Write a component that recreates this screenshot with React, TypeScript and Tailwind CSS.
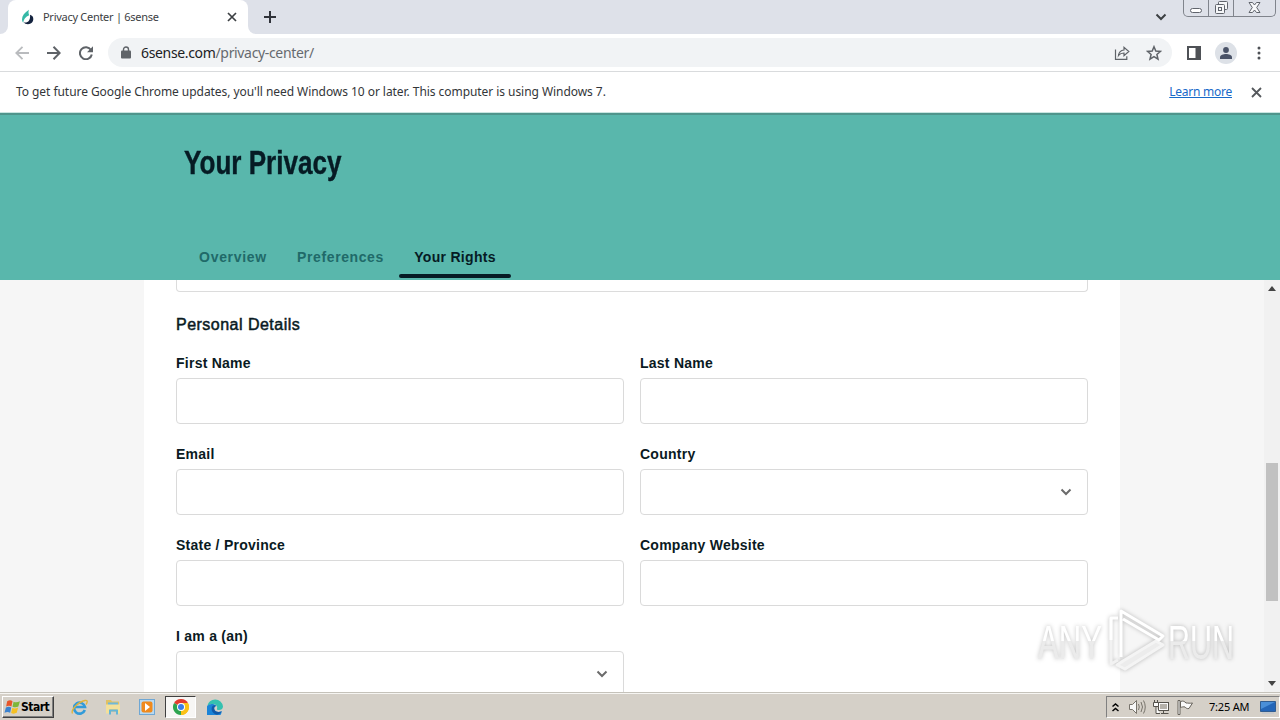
import React from "react";

interface Field {
  label: string;
  select?: boolean;
}

const FIELDS: Field[] = [
  { label: "First Name" },
  { label: "Last Name" },
  { label: "Email" },
  { label: "Country", select: true },
  { label: "State / Province" },
  { label: "Company Website" },
  { label: "I am a (an)", select: true },
];

const TABS = [
  { label: "Overview", className: "w-[98px] tracking-[0.7px]" },
  { label: "Preferences", className: "w-[117px] tracking-[0.6px]" },
  { label: "Your Rights", className: "w-[112px] tracking-[0.3px]" },
];

const ChevronDown = ({ className }: { className?: string }) => (
  <svg
    className={className}
    width="12"
    height="8"
    viewBox="0 0 12 8"
    fill="none"
    stroke="currentColor"
    strokeWidth="2"
  >
    <path d="M1.5 1.5 6 6l4.5-4.5" />
  </svg>
);

const TabStrip = () => (
  <div className="flex h-[34px] shrink-0 bg-[#dee1e9]">
    <div className="w-2 bg-white">
      <div className="h-full rounded-br-lg bg-[#dee1e9]" />
    </div>
    <div className="flex w-60 items-center rounded-t-lg bg-white pl-3 pr-[11px]">
      <svg width="15" height="16" viewBox="0 0 15 16">
        <path d="M9 .8C4.500 3.500 2 7 2 10.500c0 1.300.4 2.400 1.200 3.200C3.700 10.300 5.500 7.800 9.200 6.200 8.300 4.200 8.300 2.500 9 .800Z" fill="#35b8a6" />
        <path
          d="M10 5.800c2.300.6 3.300 2.200 3.300 4.300 0 3-2.200 5.200-5.300 5.200-2 0-3.500-.7-4.300-2 2 .6 3.700.2 5-1.200 1-1.200 1.700-3.500 1.300-6.300Z"
          fill="#14233f"
        />
        <path d="M5.300 11.500c.3-1.800 1.500-3 3.200-3.300.3 1.700-.8 3.300-3.200 3.300Z" fill="#fff" />
      </svg>
      <span className="ml-2 flex-1 whitespace-nowrap text-[11px] tracking-[-0.28px] text-[#3c4043]">
        Privacy Center | 6sense
      </span>
      <svg width="10" height="10" viewBox="0 0 10 10" stroke="#3c4043" strokeWidth="1.700">
        <path d="m1 1 8 8M9 1 1 9" />
      </svg>
    </div>
    <div className="w-2 bg-white">
      <div className="h-full rounded-bl-lg bg-[#dee1e9]" />
    </div>
    <div className="flex flex-1 items-center pl-2">
      <svg width="12" height="12" viewBox="0 0 12 12" stroke="#30333a" strokeWidth="2">
        <path d="M6 0v12M0 6h12" />
      </svg>
    </div>
    <ChevronDown className="mr-4 mt-[13px] text-[#3c4043]" />
    {/* Window caption buttons */}
    <div className="mr-1 flex h-[17px] w-[93px] rounded-b-[5px] border border-t-0 border-[#80848c] text-[#60646c]">
      <div className="flex w-[25px] items-end justify-center border-r border-[#80848c] pb-[3px]">
        <div className="h-[5px] w-3 rounded-sm border border-[#60646c] bg-white" />
      </div>
      <div className="flex w-[25px] items-end justify-center border-r border-[#80848c] pb-0.5">
        <svg width="13" height="13" viewBox="0 0 13 13" fill="#f5f6f8" stroke="currentColor">
          <rect x="3.500" y=".5" width="9" height="8" rx="1" />
          <rect x=".5" y="3.500" width="9" height="9" rx="1" />
          <rect x="3.500" y="6.500" width="3" height="3" />
        </svg>
      </div>
      <div className="flex flex-1 items-end justify-center pb-[3px]">
        <svg width="13" height="11" viewBox="0 0 13 11" fill="#f8f9fb" stroke="currentColor">
          <path d="M1 .5h3.500l2 2.500 2-2.500H12L8.700 5.500l3.300 5H8.500l-2-2.500-2 2.500H1l3.300-5Z" />
        </svg>
      </div>
    </div>
  </div>
);

const Toolbar = () => (
  <div className="flex h-[38px] shrink-0 items-center border-b border-[#d9dbdd] bg-white text-[#5f6368]">
    <svg className="ml-[15px] text-[#b9bbbe]" width="14" height="14" viewBox="0 0 14 14" fill="none" stroke="currentColor" strokeWidth="1.800">
      <path d="M14 7H1.500M7.500.8 1.300 7l6.200 6.200" />
    </svg>
    <svg className="ml-[18px]" width="14" height="14" viewBox="0 0 14 14" fill="none" stroke="currentColor" strokeWidth="2">
      <path d="M0 7h12.500M6.500.8 12.700 7l-6.200 6.200" />
    </svg>
    <svg className="ml-[18px]" width="14" height="14" viewBox="0 0 14 14">
      <path d="M12 4a6 6 0 1 0 .8 4.500" fill="none" stroke="currentColor" strokeWidth="2" />
      <path d="M14 .300v6H8Z" fill="currentColor" />
    </svg>
    <div className="ml-[15px] flex h-[29px] w-[1064px] items-center rounded-full bg-[#f1f3f5] pl-[13px] pr-[10px]">
      <svg width="10" height="13" viewBox="0 0 10 13">
        <rect y="4.500" width="10" height="8" rx="1" fill="#5f6368" />
        <path d="M2.500 5V3.500a2.500 2.500 0 0 1 5 0V5" fill="none" stroke="#5f6368" strokeWidth="1.400" />
      </svg>
      <span className="ml-[10px] flex-1 text-[14px] tracking-[-0.34px] text-[#666a6f]">
        <span className="text-[#202124]">6sense.com</span>/privacy-center/
      </span>
      <svg width="16" height="16" viewBox="0 0 16 16" fill="none" stroke="currentColor" strokeWidth="1.200">
        <path d="M1.500 4.500v9.800h11.300v-3M4.500 10.500c.5-3.600 2.500-5.200 5.500-5.500V2.300L14.800 6.500 10 10.700V8c-2.500 0-4.200.8-5.500 2.500Z" />
      </svg>
      <svg className="ml-4" width="16" height="16" viewBox="0 0 16 16" fill="none" stroke="currentColor" strokeWidth="1.500">
        <path d="m8 1.700 1.800 4.300 4.700.4-3.600 3.100 1.100 4.600L8 11.600l-4 2.500 1.100-4.600L1.500 6.400 6.200 6Z" />
      </svg>
    </div>
    <svg className="ml-[15px]" width="14" height="14" viewBox="0 0 14 14">
      <path d="M0 0h14v14H0Zm2 2v10h6.500V2Z" fill="#4e5156" fillRule="evenodd" />
    </svg>
    <div className="ml-[14px] flex size-[22px] items-center justify-center rounded-full bg-[#dde1e7]">
      <svg width="12" height="12" viewBox="0 0 12 12" fill="#4a5368">
        <circle cx="6" cy="3" r="2.900" />
        <path d="M0 12v-1.800C0 8.200 3.500 7 6 7s6 1.200 6 3.200V12Z" />
      </svg>
    </div>
    <svg className="ml-[20px]" width="4" height="14" viewBox="0 0 4 14" fill="#4e5156">
      <circle cx="2" cy="2" r="1.500" />
      <circle cx="2" cy="7" r="1.500" />
      <circle cx="2" cy="12" r="1.500" />
    </svg>
  </div>
);

const InfoBar = () => (
  <div className="flex h-[41px] shrink-0 items-center border-b border-[#c9e5e1] bg-white pl-4 pr-[18px] text-[12px] text-[#333639]">
    <span className="flex-1 whitespace-nowrap tracking-[-0.055px]">
      To get future Google Chrome updates, you'll need Windows 10 or later. This computer is using Windows 7.
    </span>
    <a className="tracking-[-0.25px] text-[#1769c9] underline">Learn more</a>
    <svg className="ml-[19px]" width="11" height="11" viewBox="0 0 11 11" stroke="#55585c" strokeWidth="1.800">
      <path d="m1 1 9 9M10 1l-9 9" />
    </svg>
  </div>
);

const PrivacyHeader = () => (
  <div className="flex h-[167px] shrink-0 flex-col justify-between border-t-2 border-[#4f958c] bg-[#59b7ac] pl-[184px] text-[#061b24]">
    <h1 className="mt-[27px] origin-left scale-x-[0.79] font-['Liberation_Sans',Arial,sans-serif] text-[33px] font-bold leading-[42px] [-webkit-text-stroke:0.4px]">
      Your Privacy
    </h1>
    <div className="mb-0.5 flex text-center font-['Liberation_Sans',Arial,sans-serif] text-[14px] font-bold">
      {TABS.map((tab) => (
        <div
          key={tab.label}
          className={`${tab.className} relative h-[37px] leading-[33px] ${
            tab.label === "Your Rights" ? "" : "text-[#206a69]"
          }`}
        >
          {tab.label}
          {tab.label === "Your Rights" && (
            <div className="absolute inset-x-0 bottom-0 h-1 rounded-sm bg-[#061b24]" />
          )}
        </div>
      ))}
    </div>
  </div>
);

const PersonalDetails = () => (
  <div className="flex min-h-0 flex-1 bg-[#f6f6f6] font-['Liberation_Sans',Arial,sans-serif] text-[#0a1a22]">
    <div className="min-w-0 flex-1 overflow-hidden">
      <div className="mx-auto h-full w-[976px] bg-white px-8">
        <div className="h-3 rounded-b border border-t-0 border-[#dcdcdc]" />
        <h2 className="mt-[21px] text-[16px] font-medium leading-6 tracking-[0.48px] [-webkit-text-stroke:0.5px]">
          Personal Details
        </h2>
        <div className="mt-4 grid grid-cols-2 gap-x-4 gap-y-5">
          {FIELDS.map((field) => (
            <div key={field.label}>
              <div className="h-[25px] text-[14px] font-bold leading-5 tracking-[0.25px]">
                {field.label}
              </div>
              <div className="flex h-[46px] items-center justify-end rounded border border-[#dadada] bg-white pr-[15px]">
                {field.select && <ChevronDown className="text-[#6b6b6b]" />}
              </div>
            </div>
          ))}
        </div>
      </div>
    </div>
    {/* Scrollbar */}
    <div className="flex w-4 flex-col items-center bg-[#f1f1f1] py-1.5">
      <svg width="8" height="5" viewBox="0 0 8 5" fill="#444">
        <path d="M4 0 8 5H0Z" />
      </svg>
      <div className="mt-[172px] h-[138px] w-3 bg-[#c1c1c1]" />
      <svg className="mt-auto" width="8" height="5" viewBox="0 0 8 5" fill="#444">
        <path d="M0 0h8L4 5Z" />
      </svg>
    </div>
  </div>
);

const Watermark = () => (
  <svg
    className="absolute left-[1030px] top-[600px] drop-shadow-[0_0_2px_rgba(0,0,0,0.25)]"
    width="250"
    height="84"
    viewBox="0 0 250 84"
  >
    <defs>
      <linearGradient id="fade" x1="0" y1="0" x2="0" y2="1">
        <stop offset="0.5" stopColor="#fff" />
        <stop offset="0.5" stopColor="#ebebeb" />
      </linearGradient>
    </defs>
    <g
      fill="url(#fade)"
      fontFamily="'Liberation Sans', sans-serif"
      fontSize="49"
    >
      <text x="8" y="58.500" textLength="64" lengthAdjust="spacingAndGlyphs">ANY</text>
      <text x="138" y="58.500" textLength="66" lengthAdjust="spacingAndGlyphs">RUN</text>
    </g>
    <g fill="none" strokeLinejoin="round" strokeWidth="3">
      <path d="M93 61 126 41 133 45 95 69 87 65Z" fill="#ececec" stroke="#f4f4f4" />
      <path d="M81 18v46l7-4" stroke="#f2f2f2" />
      <path d="M88 18h-7v22" stroke="#fff" />
      <path d="M91 57V11l42 25-4 4-36-21" stroke="#fff" />
    </g>
  </svg>
);

const InternetExplorerIcon = () => (
  <svg width="17" height="17" viewBox="0 0 17 17" fill="none">
    <path d="M13.800 11A5.500 5.500 0 1 1 14 8H4" stroke="#329bd9" strokeWidth="2.600" />
    <path d="M1.500 14.500C-.500 11 7 3 14 1.500c3-.5 2.500 2 1 4" stroke="#e0b43a" strokeWidth="1.300" />
  </svg>
);

const ExplorerIcon = () => (
  <svg width="16" height="16" viewBox="0 0 16 16">
    <path d="M1 1h5l1 1.500h7v10H1Z" fill="#e0c164" />
    <path d="M3 3.500h10v3H3Z" fill="#6db8dc" />
    <path d="M1 5.500h14v9h-3v-4H5v4H1Z" fill="#f3e09a" />
    <path d="M4 15.500v-5h9v5h-2v-3H6v3Z" fill="#65b5d8" />
  </svg>
);

const MediaPlayerIcon = () => (
  <svg width="16" height="16" viewBox="0 0 16 16">
    <rect x=".5" y=".5" width="15" height="15" fill="#b9d9f0" stroke="#6fa7d4" />
    <rect x="2.500" y="2.500" width="11" height="11" rx="2" fill="#f08a1d" />
    <path d="m6 4 5 4-5 4Z" fill="#fff" />
  </svg>
);

const ChromeIcon = () => (
  <svg width="16" height="16" viewBox="0 0 16 16">
    <path d="M8 8 1.070 4A8 8 0 0 1 14.930 4Z" fill="#e33b2e" />
    <path d="M8 8 14.930 4A8 8 0 0 1 8 16Z" fill="#fbc116" />
    <path d="M8 8v8A8 8 0 0 1 1.070 4Z" fill="#2da44f" />
    <path d="M8 4h6.930A8 8 0 0 1 8 16l3.500-6Z" fill="#fbc116" />
    <circle cx="8" cy="8" r="4" fill="#fff" />
    <circle cx="8" cy="8" r="3" fill="#3b7de8" />
  </svg>
);

const EdgeIcon = () => (
  <svg width="16" height="16" viewBox="0 0 16 16">
    <path d="M.2 7A8 8 0 0 1 16 7.500c0 2.500-2 3.500-4 3.500-1.500 0-2.500-.5-2-1.300C11 7 8.500 5 5.500 5 2.800 5 1 6 .200 7Z" fill="#35c1b0" />
    <path d="M.2 7C2 4.500 7 4 9.500 7 7.500 7 7 8.500 7.200 10c.5 2.500 4 4 7.600 2.300A8 8 0 1 1 .200 7Z" fill="#1a84d8" />
    <path d="M5.200 7.500C3.500 10.500 5.500 15 10 15.700c2-.4 3.800-1.700 4.800-3.400C11 14 7.700 12.500 7.200 10 7 8.500 7.500 7 9.500 7 8 6 6.200 6 5.200 7.500Z" fill="#1159a8" />
  </svg>
);

const WindowsFlag = () => (
  <svg width="17" height="16" viewBox="0 0 16 15">
    <path d="M3 2c2-1 3.500-1 5 0L7 7C5.500 6 4 6 2 7Z" fill="#e8562a" />
    <path d="M9 2.500c2 1 4 .5 6-.5l-1.500 5C12 8 10 8 8 7.200Z" fill="#7db63a" />
    <path d="M1.800 8c2-1 3.500-1 5 0l-1 5C4 12 2.500 12 .5 13Z" fill="#3b82cf" />
    <path d="M7.800 8.500c2 .8 3.700.5 5.500-.5L12 13c-2 1-3.500 1-5.300.2Z" fill="#f5c023" />
  </svg>
);

const Taskbar = () => (
  <div className="flex h-7 shrink-0 items-center border-t border-[#c5c2ba] bg-[#d5d0c8] text-black shadow-[inset_0_1px_0_#f6f5f2]">
    <div className="ml-0.5 mt-px flex h-[22px] w-[52px] items-center border border-b-[#404040] border-l-white border-r-[#404040] border-t-white pl-px shadow-[inset_-1px_-1px_0_#808080]">
      <WindowsFlag />
      <span className="font-['DejaVu_Sans_Condensed','DejaVu_Sans',sans-serif] text-[12px] font-bold tracking-[-0.5px]">Start</span>
    </div>
    <div className="ml-[17px] mt-px"><InternetExplorerIcon /></div>
    <div className="ml-[17px] mt-px"><ExplorerIcon /></div>
    <div className="ml-[18px] mt-px"><MediaPlayerIcon /></div>
    <div className="ml-[10px] mt-px flex h-[22px] w-[31px] items-center justify-center border border-b-white border-l-[#404040] border-r-white border-t-[#404040] bg-[#f7f6f4]">
      <ChromeIcon />
    </div>
    <div className="ml-[11px] mt-px"><EdgeIcon /></div>
    <div className="ml-auto mt-px flex h-[22px] w-[174px] items-center border border-b-white border-l-[#808080] border-r-white border-t-[#808080]">
      <svg className="ml-[5px]" width="7" height="9" viewBox="0 0 7 9" fill="none" stroke="#000" strokeWidth="1.500">
        <path d="M.5 3.500 3.500 1l3 2.500M.5 8l3-2.500 3 2.500" />
      </svg>
      <svg className="ml-[10px]" width="17" height="16" viewBox="0 0 17 16" fill="#f7f7f7" stroke="#77736b">
        <path d="M.5 5.500h3l4-4v13l-4-4h-3Z" />
        <path d="M9.500 5q1.500 3 0 6M12 3q3 5 0 10M14.500 1.500q3.500 6.500 0 13" fill="none" />
      </svg>
      <svg className="ml-[7px]" width="17" height="16" viewBox="0 0 17 16" fill="#fafafa" stroke="#55524c">
        <rect x="5.500" y="3.500" width="10" height="8" />
        <path d="M7 5h7v5H7Z" fill="#b5b1aa" stroke="none" />
        <path d="M8 14.500h7.500M10.500 12v2M1.500 1v3M4.500 1v3M.5 3.500h5v4h-5ZM3 7.500v7h4" />
      </svg>
      <svg className="ml-[7px]" width="17" height="16" viewBox="0 0 17 16" fill="#fafafa" stroke="#66625b">
        <path d="M1 1.500h2v14H1ZM3.500 2.500c3-1 4 0 5.500 1.500 2 0 4 .5 6.500 0L12 9.500c-2 .5-3-.5-4-1.500-1.500-.5-3 0-4.500.5Z" />
      </svg>
      <span className="ml-[15px] whitespace-nowrap text-[11px] tracking-[-0.2px]">7:25 AM</span>
      <svg className="ml-auto mr-[3px]" width="16" height="13" viewBox="0 0 16 13">
        <path d="M.5.5h15v10H.5Z" fill="#2466b8" stroke="#315d91" />
        <path d="M1 1h14L1 8Z" fill="#4a8fd8" />
        <path d="M2 11.500h12v1H2Z" fill="#b9c3ce" />
      </svg>
    </div>
  </div>
);

export default function App() {
  return (
    <div className="relative flex h-[720px] w-[1280px] flex-col overflow-hidden bg-white font-['Noto_Sans','Open_Sans',sans-serif]">
      <TabStrip />
      <Toolbar />
      <InfoBar />
      <PrivacyHeader />
      <PersonalDetails />
      <Taskbar />
      <Watermark />
    </div>
  );
}
